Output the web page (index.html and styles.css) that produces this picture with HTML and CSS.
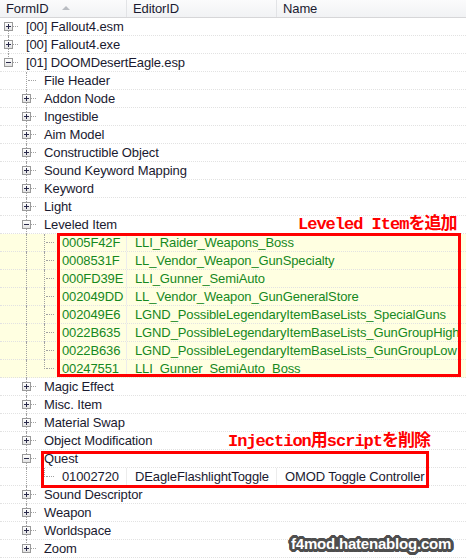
FILE: index.html
```html
<!DOCTYPE html>
<html lang="ja">
<head>
    <meta charset="UTF-8">
    <title>DOOMDesertEagle.esp</title>
    <link rel="stylesheet" href="styles.css">
</head>
<body>
    <div class="view">
        <div class="head">
            <div class="hc hc-id">FormID<span class="sort"></span></div>
            <div class="hc hc-ed">EditorID</div>
            <div class="hc hc-name">Name</div>
        </div>

        <div class="rows">
            <!-- plugins -->
            <div class="row"><span class="ind f"><b class="exp plus"></b></span><span class="txt">[00] Fallout4.esm</span></div>
            <div class="row"><span class="ind t"><b class="exp plus"></b></span><span class="txt">[00] Fallout4.exe</span></div>
            <div class="row"><span class="ind l"><b class="exp"></b></span><span class="txt">[01] DOOMDesertEagle.esp</span></div>

            <!-- record groups -->
            <div class="row"><span class="ind"></span><span class="ind t"></span><span class="txt">File Header</span></div>
            <div class="row"><span class="ind"></span><span class="ind t"><b class="exp plus"></b></span><span class="txt">Addon Node</span></div>
            <div class="row"><span class="ind"></span><span class="ind t"><b class="exp plus"></b></span><span class="txt">Ingestible</span></div>
            <div class="row"><span class="ind"></span><span class="ind t"><b class="exp plus"></b></span><span class="txt">Aim Model</span></div>
            <div class="row"><span class="ind"></span><span class="ind t"><b class="exp plus"></b></span><span class="txt">Constructible Object</span></div>
            <div class="row"><span class="ind"></span><span class="ind t"><b class="exp plus"></b></span><span class="txt">Sound Keyword Mapping</span></div>
            <div class="row"><span class="ind"></span><span class="ind t"><b class="exp plus"></b></span><span class="txt">Keyword</span></div>
            <div class="row"><span class="ind"></span><span class="ind t"><b class="exp plus"></b></span><span class="txt">Light</span></div>
            <div class="row"><span class="ind"></span><span class="ind t"><b class="exp"></b></span><span class="txt">Leveled Item</span></div>

            <div class="row leaf new"><div class="c1"><span class="ind"></span><span class="ind v"></span><span class="ind t"></span><span class="txt">0005F42F</span></div><div class="c2">LLI_Raider_Weapons_Boss</div></div>
            <div class="row leaf new"><div class="c1"><span class="ind"></span><span class="ind v"></span><span class="ind t"></span><span class="txt">0008531F</span></div><div class="c2">LL_Vendor_Weapon_GunSpecialty</div></div>
            <div class="row leaf new"><div class="c1"><span class="ind"></span><span class="ind v"></span><span class="ind t"></span><span class="txt">000FD39E</span></div><div class="c2">LLI_Gunner_SemiAuto</div></div>
            <div class="row leaf new"><div class="c1"><span class="ind"></span><span class="ind v"></span><span class="ind t"></span><span class="txt">002049DD</span></div><div class="c2">LL_Vendor_Weapon_GunGeneralStore</div></div>
            <div class="row leaf new"><div class="c1"><span class="ind"></span><span class="ind v"></span><span class="ind t"></span><span class="txt">002049E6</span></div><div class="c2">LGND_PossibleLegendaryItemBaseLists_SpecialGuns</div></div>
            <div class="row leaf new"><div class="c1"><span class="ind"></span><span class="ind v"></span><span class="ind t"></span><span class="txt">0022B635</span></div><div class="c2">LGND_PossibleLegendaryItemBaseLists_GunGroupHigh</div></div>
            <div class="row leaf new"><div class="c1"><span class="ind"></span><span class="ind v"></span><span class="ind t"></span><span class="txt">0022B636</span></div><div class="c2">LGND_PossibleLegendaryItemBaseLists_GunGroupLow</div></div>
            <div class="row leaf new"><div class="c1"><span class="ind"></span><span class="ind v"></span><span class="ind l"></span><span class="txt">00247551</span></div><div class="c2">LLI_Gunner_SemiAuto_Boss</div></div>

            <div class="row"><span class="ind"></span><span class="ind t"><b class="exp plus"></b></span><span class="txt">Magic Effect</span></div>
            <div class="row"><span class="ind"></span><span class="ind t"><b class="exp plus"></b></span><span class="txt">Misc. Item</span></div>
            <div class="row"><span class="ind"></span><span class="ind t"><b class="exp plus"></b></span><span class="txt">Material Swap</span></div>
            <div class="row"><span class="ind"></span><span class="ind t"><b class="exp plus"></b></span><span class="txt">Object Modification</span></div>
            <div class="row"><span class="ind"></span><span class="ind t"><b class="exp"></b></span><span class="txt">Quest</span></div>

            <div class="row leaf"><div class="c1"><span class="ind"></span><span class="ind v"></span><span class="ind l"></span><span class="txt">01002720</span></div><div class="c2 fixed">DEagleFlashlightToggle</div><div class="c3">OMOD Toggle Controller</div></div>

            <div class="row"><span class="ind"></span><span class="ind t"><b class="exp plus"></b></span><span class="txt">Sound Descriptor</span></div>
            <div class="row"><span class="ind"></span><span class="ind t"><b class="exp plus"></b></span><span class="txt">Weapon</span></div>
            <div class="row"><span class="ind"></span><span class="ind t"><b class="exp plus"></b></span><span class="txt">Worldspace</span></div>
            <div class="row"><span class="ind"></span><span class="ind l"><b class="exp plus"></b></span><span class="txt">Zoom</span></div>
        </div>

        <!-- notes drawn over the tree -->
        <div class="frame frame-add"></div>
        <div class="frame frame-del"></div>
        <div class="note note-add">Leveled Itemを追加</div>
        <div class="note note-del">Injection用scriptを削除</div>
        <div class="stamp">f4mod.hatenablog.com</div>
    </div>
</body>
</html>
```

FILE: styles.css
```css
* {
    margin: 0;
    padding: 0;
    box-sizing: border-box;
}

body {
    width: 466px;
    height: 560px;
    overflow: hidden;
    background: #fff;
    font-family: "Liberation Sans", Arial, sans-serif;
    font-size: 13px;
    letter-spacing: -0.12px;
    color: #1a1a30;
}

.view {
    position: relative;
    height: 560px;
}

/* column header */
.head {
    display: flex;
    height: 18px;
    background: linear-gradient(#fbfbfc, #f1f2f4);
    border-bottom: 1px solid #d6d6d8;
    line-height: 17px;
}

.hc {
    position: relative;
    padding-left: 6px;
    white-space: nowrap;
}

.hc-id { width: 126px; }
.hc-ed { width: 150px; border-left: 1px solid #e2e3e6; }
.hc-name { flex: 1; border-left: 1px solid #e2e3e6; }

.sort {
    position: absolute;
    left: 62px;
    top: 6px;
    border-left: 4px solid transparent;
    border-right: 4px solid transparent;
    border-bottom: 4px solid #b9bcc2;
}

/* tree rows */
.row {
    display: flex;
    align-items: flex-start;
    height: 18px;
    border-bottom: 1px dotted #e2e2e2;
    line-height: 18px;
    white-space: nowrap;
}

.txt {
    padding-left: 8px;
}

.ind {
    position: relative;
    flex: none;
    width: 18px;
    height: 18px;
}

.ind.v::before,
.ind.t::before,
.ind.l::before,
.ind.f::before {
    content: "";
    position: absolute;
    left: 8px;
    top: 0;
    height: 18px;
    border-left: 1px dotted #a2a2a2;
}

.ind.l::before { height: 9px; }
.ind.f::before { top: 8px; height: 10px; }

.ind.t::after,
.ind.l::after,
.ind.f::after {
    content: "";
    position: absolute;
    left: 10px;
    top: 8px;
    width: 8px;
    border-top: 1px dotted #a2a2a2;
}

/* expand / collapse box */
.exp {
    position: absolute;
    z-index: 1;
    left: 4px;
    top: 4px;
    width: 9px;
    height: 9px;
    border: 1px solid #9a9a9a;
    background: linear-gradient(#ffffff, #e3e3e3);
}

.exp::before {
    content: "";
    position: absolute;
    left: 1px;
    top: 3px;
    width: 5px;
    height: 1px;
    background: #2a2a4a;
}

.exp.plus::after {
    content: "";
    position: absolute;
    left: 3px;
    top: 1px;
    width: 1px;
    height: 5px;
    background: #2a2a4a;
}

/* record rows */
.c1 {
    display: flex;
    flex: none;
    width: 126px;
}

.c2 {
    flex: 1;
    height: 17px;
    padding-left: 8px;
    border-left: 1px solid #ececec;
}

.c2.fixed {
    flex: none;
    width: 150px;
}

.c3 {
    flex: 1;
    height: 17px;
    padding-left: 8px;
    border-left: 1px solid #ececec;
}

.row.new {
    background: #ffffe1;
    color: #16881e;
}

/* red notes */
.frame {
    position: absolute;
    border: 3px solid #ff0000;
}

.frame-add { left: 57px; top: 233px; width: 404px; height: 144px; }
.frame-del { left: 41px; top: 451px; width: 388px; height: 37px; }

.note {
    position: absolute;
    color: #ff0000;
    font-family: "Liberation Mono", "Noto Sans CJK JP", monospace;
    font-weight: bold;
    font-size: 17px;
    letter-spacing: -1px;
    line-height: 20px;
    white-space: nowrap;
}

.note-add { left: 298px; top: 215px; }
.note-del { left: 228px; top: 432px; }

/* blog stamp */
.stamp {
    position: absolute;
    left: 291px;
    top: 535px;
    color: #fff;
    font-weight: bold;
    font-size: 15px;
    letter-spacing: -0.2px;
    line-height: 18px;
    text-shadow:
        3px 0 #4e4e4e, -3px 0 #4e4e4e, 0 3px #4e4e4e, 0 -3px #4e4e4e,
        2px 2px #4e4e4e, -2px 2px #4e4e4e, 2px -2px #4e4e4e, -2px -2px #4e4e4e,
        3px 1px #4e4e4e, -3px 1px #4e4e4e, 3px -1px #4e4e4e, -3px -1px #4e4e4e,
        1px 3px #4e4e4e, -1px 3px #4e4e4e, 1px -3px #4e4e4e, -1px -3px #4e4e4e;
}
```
